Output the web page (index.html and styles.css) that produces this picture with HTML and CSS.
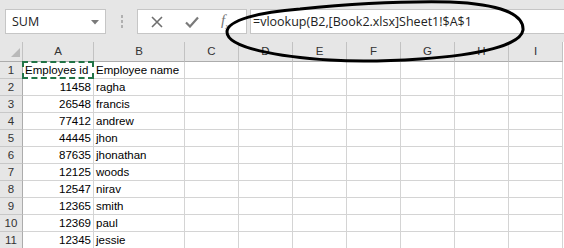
FILE: index.html
```html
<!DOCTYPE html>
<html>
<head>
<meta charset="utf-8">
<link rel="stylesheet" href="styles.css">
</head>
<body>
<div class="page">
  <div class="toolbar">
    <div class="namebox">
      <span class="nb-text">SUM</span>
      <svg class="nb-arrow" width="8" height="5" viewBox="0 0 8 5"><path d="M0 0 H8 L4 4.5 Z" fill="#7a7a7a"/></svg>
    </div>
    <div class="sep"><i></i><i></i><i></i></div>
    <div class="fbtns">
      <svg class="btn-x" width="12" height="12" viewBox="0 0 12 12"><path d="M1 1 L11 11 M11 1 L1 11" stroke="#6f6f6f" stroke-width="1.6" fill="none"/></svg>
      <svg class="btn-ok" width="14" height="12" viewBox="0 0 14 12"><path d="M1 6.5 L5 10.5 L13 1.5" stroke="#7a7a7a" stroke-width="2.2" fill="none"/></svg>
      <span class="btn-fx">f<sub>x</sub></span>
    </div>
    <div class="finput">=vlookup(B2,[Book2.xlsx]Sheet1!$A$1</div>
  </div>
  <div class="sheet">
    <div class="corner"><svg width="9" height="9" viewBox="0 0 9 9"><path d="M9 0 V9 H0 Z" fill="#b9b9b9"/></svg></div>
    <div class="ch">A</div><div class="ch">B</div><div class="ch">C</div><div class="ch">D</div><div class="ch">E</div><div class="ch">F</div><div class="ch">G</div><div class="ch">H</div><div class="ch">I</div>

    <div class="rh">1</div><div class="c sel">Employee id</div><div class="c">Employee name</div><div class="c"></div><div class="c"></div><div class="c"></div><div class="c"></div><div class="c"></div><div class="c"></div><div class="c"></div>
    <div class="rh">2</div><div class="c n">11458</div><div class="c">ragha</div><div class="c"></div><div class="c"></div><div class="c"></div><div class="c"></div><div class="c"></div><div class="c"></div><div class="c"></div>
    <div class="rh">3</div><div class="c n">26548</div><div class="c">francis</div><div class="c"></div><div class="c"></div><div class="c"></div><div class="c"></div><div class="c"></div><div class="c"></div><div class="c"></div>
    <div class="rh">4</div><div class="c n">77412</div><div class="c">andrew</div><div class="c"></div><div class="c"></div><div class="c"></div><div class="c"></div><div class="c"></div><div class="c"></div><div class="c"></div>
    <div class="rh">5</div><div class="c n">44445</div><div class="c">jhon</div><div class="c"></div><div class="c"></div><div class="c"></div><div class="c"></div><div class="c"></div><div class="c"></div><div class="c"></div>
    <div class="rh">6</div><div class="c n">87635</div><div class="c">jhonathan</div><div class="c"></div><div class="c"></div><div class="c"></div><div class="c"></div><div class="c"></div><div class="c"></div><div class="c"></div>
    <div class="rh">7</div><div class="c n">12125</div><div class="c">woods</div><div class="c"></div><div class="c"></div><div class="c"></div><div class="c"></div><div class="c"></div><div class="c"></div><div class="c"></div>
    <div class="rh">8</div><div class="c n">12547</div><div class="c">nirav</div><div class="c"></div><div class="c"></div><div class="c"></div><div class="c"></div><div class="c"></div><div class="c"></div><div class="c"></div>
    <div class="rh">9</div><div class="c n">12365</div><div class="c">smith</div><div class="c"></div><div class="c"></div><div class="c"></div><div class="c"></div><div class="c"></div><div class="c"></div><div class="c"></div>
    <div class="rh">10</div><div class="c n">12369</div><div class="c">paul</div><div class="c"></div><div class="c"></div><div class="c"></div><div class="c"></div><div class="c"></div><div class="c"></div><div class="c"></div>
    <div class="rh">11</div><div class="c n">12345</div><div class="c">jessie</div><div class="c"></div><div class="c"></div><div class="c"></div><div class="c"></div><div class="c"></div><div class="c"></div><div class="c"></div>
  </div>
  <svg class="ellipse" width="564" height="70" viewBox="0 0 564 70"><path d="M227,32 C227,20 260,12 300,9 C340,5 400,1 450,2 C500,4 524,14 523,30 C521,45 480,55 420,59 C390,61 360,62 330,60 C280,57 227,48 227,32 Z" fill="none" stroke="#000" stroke-width="3"/></svg>
</div>
</body>
</html>
```
FILE: styles.css
```css
html, body {
  margin: 0;
  padding: 0;
  background: #ffffff;
}
.page {
  position: relative;
  width: 564px;
  height: 248px;
  overflow: hidden;
  font-family: "Liberation Sans", Arial, sans-serif;
}
.toolbar {
  height: 42px;
  box-sizing: border-box;
  padding-top: 9px;
  background: #e6e6e6;
  display: flex;
  align-items: flex-start;
}
.namebox {
  margin-left: 5px;
  width: 101px;
  height: 25px;
  box-sizing: border-box;
  border: 1px solid #c6c6c6;
  background: #fff;
  display: flex;
  align-items: center;
  justify-content: space-between;
  padding: 0 6px 0 6px;
}
.nb-text {
  font-family: "Open Sans", "Noto Sans", sans-serif;
  font-size: 12.5px;
  color: #222;
}
.nb-arrow { margin-top: 1px; }
.sep {
  width: 31px;
  height: 25px;
  display: flex;
  flex-direction: column;
  align-items: center;
  justify-content: center;
  gap: 2px;
}
.sep i {
  display: block;
  width: 2px;
  height: 3px;
  background: #b0b0b0;
}
.fbtns {
  width: 110px;
  height: 25px;
  box-sizing: border-box;
  border: 1px solid #c6c6c6;
  background: #fff;
  display: flex;
  align-items: center;
  padding-left: 13px;
}
.btn-x { margin-right: 22px; }
.btn-ok { margin-right: 22px; }
.btn-fx {
  font-family: "Liberation Serif", serif;
  font-style: italic;
  font-size: 15px;
  color: #777;
  line-height: 1;
}
.btn-fx sub { font-size: 9px; }
.finput {
  margin-left: 3px;
  flex: 1;
  height: 25px;
  box-sizing: border-box;
  border: 1px solid #c6c6c6;
  border-right: none;
  background: #fff;
  padding-left: 2px;
  font-family: "Open Sans", "Noto Sans", sans-serif;
  font-size: 12.5px;
  line-height: 23px;
  color: #222;
  white-space: nowrap;
}
.sheet {
  display: grid;
  grid-template-columns: 23px 71px 91px repeat(7, 54px);
  grid-template-rows: 20px repeat(11, 17px);
  font-size: 11.5px;
}
.corner {
  background: #e6e6e6;
  border-right: 1px solid #c2c2c2;
  border-bottom: 1px solid #acacac;
  box-sizing: border-box;
  display: flex;
  align-items: flex-end;
  justify-content: flex-end;
  padding: 0 2px 4px 0;
}
.ch {
  background: #e6e6e6;
  border-right: 1px solid #c2c2c2;
  border-bottom: 1px solid #acacac;
  box-sizing: border-box;
  text-align: center;
  line-height: 19px;
  color: #333;
}
.rh {
  background: #e6e6e6;
  border-right: 1px solid #acacac;
  border-bottom: 1px solid #c8c8c8;
  box-sizing: border-box;
  text-align: center;
  line-height: 16px;
  color: #333;
}
.c {
  border-right: 1px solid #d4d4d4;
  border-bottom: 1px solid #d4d4d4;
  box-sizing: border-box;
  line-height: 16px;
  padding: 0 2px;
  white-space: nowrap;
  overflow: visible;
  color: #000;
}
.c.n { text-align: right; }
.c.sel {
  position: relative;
  border: 2px dashed #217346;
  line-height: 14px;
  margin: -1px 0 0 -1px;
  padding: 0 1px;
  overflow: hidden;
}
.ellipse {
  position: absolute;
  left: 0;
  top: 0;
  pointer-events: none;
}
```
